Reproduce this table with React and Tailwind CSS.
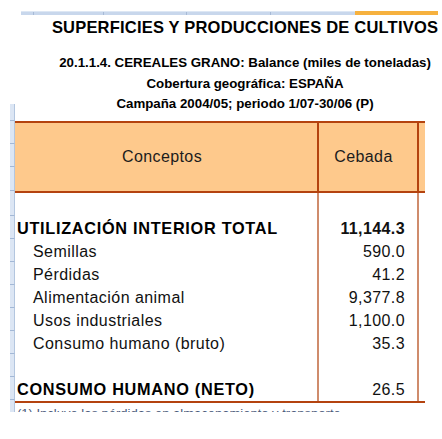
import React from 'react';

const rows = [
  { label: '', value: '', h: 'h-[24px]' },
  { label: 'UTILIZACIÓN INTERIOR TOTAL', value: '11,144.3', bold: true },
  { label: 'Semillas', value: '590.0', indent: true },
  { label: 'Pérdidas', value: '41.2', indent: true },
  { label: 'Alimentación animal', value: '9,377.8', indent: true },
  { label: 'Usos industriales', value: '1,100.0', indent: true },
  { label: 'Consumo humano (bruto)', value: '35.3', indent: true },
  { label: '', value: '' },
  { label: 'CONSUMO HUMANO (NETO)', value: '26.5', bold: true, lastBold: true },
];

// heights of the excel row-header ticks on the left strip
const stripCells = [17, 23, 23, 24, 25, 23, 23, 23, 23, 23, 23, 23, 23, 30];

const App = () => {
  return (
    <div className="w-[442px] h-[439px] bg-white overflow-hidden pt-[11px] text-[#111] font-['Liberation_Sans',Arial,sans-serif]">

      {/* column header strip */}
      <div className="ml-[21px] w-[417px] h-[4px] flex">
        <div className="w-[334px] h-full bg-[#c8d7ec] border-t border-[#dde7f4] flex">
          <div className="w-[13px] border-r border-[#a7bad6]"></div>
          <div className="w-[70px] border-r border-[#a7bad6]"></div>
          <div className="w-[83px] border-r border-[#a7bad6]"></div>
          <div className="w-[84px] border-r border-[#a7bad6]"></div>
          <div className="flex-1"></div>
        </div>
        <div className="flex-1 h-full bg-[#f6b13e]"></div>
      </div>

      {/* Title */}
      <div className="mt-[1px] h-[22px] leading-[22px] pl-[50px] pr-[2px] text-center font-bold text-[16.5px] text-black whitespace-nowrap tracking-[0.2px]">
        SUPERFICIES Y PRODUCCIONES DE CULTIVOS
      </div>

      <div className="flex h-[374px] overflow-hidden">
        {/* row header strip */}
        <div className="ml-[10px] w-[5px] flex flex-col">
          <div className="h-[66px] shrink-0"></div>
          {stripCells.map((h, i) => (
            <div
              key={i}
              className="shrink-0 bg-[#dce6f4] border-r border-r-[#b3c6df] border-b border-b-[#a3b8d6]"
              style={{ height: h }}
            ></div>
          ))}
        </div>

        <div className="w-[410px] flex flex-col">
          {/* Subtitles */}
          <div className="mt-[15px] pl-[50px] flex flex-col items-center font-bold text-[13.3px] leading-[20.5px] text-black whitespace-nowrap">
            <span>20.1.1.4. CEREALES GRANO: Balance (miles de toneladas)</span>
            <span>Cobertura geográfica: ESPAÑA</span>
            <span>Campaña 2004/05; periodo 1/07-30/06 (P)</span>
          </div>

          {/* Table */}
          <div className="mt-[6px] border-t-2 border-b-2 border-[#b4430f]">
            <div className="flex h-[70px] bg-[#fec98c] border-b-2 border-[#b4430f] text-[16px] tracking-[0.4px] text-[#1c1c1c]">
              <div className="w-[304px] border-r-2 border-[#b4430f] flex items-center justify-center pr-[8px]">
                Conceptos
              </div>
              <div className="w-[100px] border-r-2 border-[#b4430f] flex items-center justify-center pr-[9px]">
                Cebada
              </div>
              <div className="flex-1"></div>
            </div>

            {rows.map((r, i) => (
              <div key={i} className={`flex ${r.h || 'h-[23px]'} text-[16px] leading-[23px]`}>
                <div
                  className={`w-[304px] border-r-2 border-[#cf8c6c] whitespace-nowrap ${
                    r.indent ? 'pl-[18px] tracking-[0.45px]' : 'pl-[2px]'
                  } ${r.bold ? 'font-bold text-[16.3px] tracking-[0.7px] text-black' : ''}`}
                >
                  {r.label}
                </div>
                <div
                  className={`w-[100px] border-r-2 border-[#cf8c6c] text-right pr-[12px] tracking-[0.4px] ${
                    r.bold && !r.lastBold ? 'font-bold' : ''
                  }`}
                >
                  {r.value}
                </div>
                <div className="flex-1"></div>
              </div>
            ))}
          </div>

          {/* footnote, cut off by the window */}
          <div className="h-[10px] overflow-hidden pl-[2px] pt-[3px] text-[13px] leading-[15px] text-[#4a5a7a] whitespace-nowrap">
            (1) Incluye las pérdidas en almacenamiento y transporte
          </div>
        </div>
      </div>
    </div>
  );
};

export default App;
